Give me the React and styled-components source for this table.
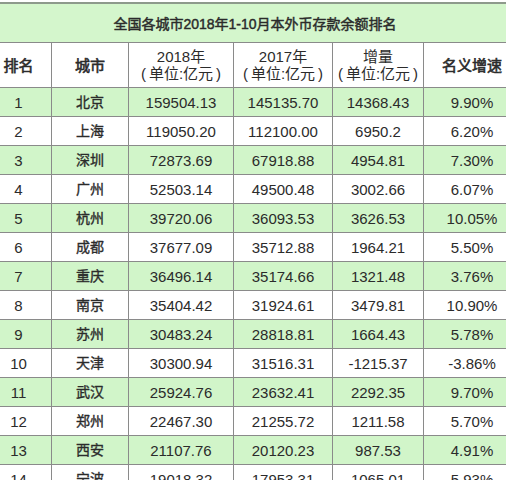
import React from 'react';
import styled, { createGlobalStyle } from 'styled-components';

const rows = [
  ['1', '北京', '159504.13', '145135.70', '14368.43', '9.90%'],
  ['2', '上海', '119050.20', '112100.00', '6950.2', '6.20%'],
  ['3', '深圳', '72873.69', '67918.88', '4954.81', '7.30%'],
  ['4', '广州', '52503.14', '49500.48', '3002.66', '6.07%'],
  ['5', '杭州', '39720.06', '36093.53', '3626.53', '10.05%'],
  ['6', '成都', '37677.09', '35712.88', '1964.21', '5.50%'],
  ['7', '重庆', '36496.14', '35174.66', '1321.48', '3.76%'],
  ['8', '南京', '35404.42', '31924.61', '3479.81', '10.90%'],
  ['9', '苏州', '30483.24', '28818.81', '1664.43', '5.78%'],
  ['10', '天津', '30300.94', '31516.31', '-1215.37', '-3.86%'],
  ['11', '武汉', '25924.76', '23632.41', '2292.35', '9.70%'],
  ['12', '郑州', '22467.30', '21255.72', '1211.58', '5.70%'],
  ['13', '西安', '21107.76', '20120.23', '987.53', '4.91%'],
  ['14', '宁波', '19018.32', '17953.31', '1065.01', '5.93%'],
];

// full-width looking brackets: ascii parens with a little air inside
const Unit = () => (
  <UnitLine>
    <Paren $open>(</Paren>单位:亿元<Paren>)</Paren>
  </UnitLine>
);

const App = () => {
  return (
    <>
      <GlobalStyle />
      <Table>
        <TitleRow>全国各城市2018年1-10月本外币存款余额排名</TitleRow>

        <Row $head>
          <Cell $first $strong>排名</Cell>
          <Cell $strong>城市</Cell>
          <Cell>
            <HeadLine>2018年</HeadLine>
            <Unit />
          </Cell>
          <Cell>
            <HeadLine>2017年</HeadLine>
            <Unit />
          </Cell>
          <Cell>
            <HeadLine>增量</HeadLine>
            <Unit />
          </Cell>
          <Cell $last $strong>名义增速</Cell>
        </Row>

        {rows.map((r, i) => (
          <Row key={r[0]} $green={i % 2 === 0}>
            <Cell $first>{r[0]}</Cell>
            <Cell $city>{r[1]}</Cell>
            <Cell>{r[2]}</Cell>
            <Cell>{r[3]}</Cell>
            <Cell>{r[4]}</Cell>
            <Cell $last>{r[5]}</Cell>
          </Row>
        ))}
      </Table>
    </>
  );
};

const GlobalStyle = createGlobalStyle`
  html, body {
    margin: 0;
    padding: 0;
    background: #fff;
    overflow: hidden;
  }
  body {
    font-family: 'Liberation Sans', 'Noto Sans CJK SC', sans-serif;
    color: #2b2b2b;
  }
`;

const Table = styled.div`
  width: 506px;
  height: 480px;
  padding-top: 2px;
  box-sizing: border-box;
  overflow: hidden;
`;

const TitleRow = styled.div`
  height: 41px;
  box-sizing: border-box;
  border-top: 2px solid #8e9a8c;
  border-bottom: 1px solid #8a8a8a;
  background: #d4f6cc;
  display: flex;
  align-items: center;
  justify-content: center;
  font-size: 14px;
  font-weight: 400;
  -webkit-text-stroke: 0.45px #2b2b2b;
  color: #2b2b2b;
  padding-left: 4px;
`;

const Row = styled.div`
  display: grid;
  grid-template-columns: 51px 77px 105px 99px 91px 83px;
  height: ${(p) => (p.$head ? '45px' : '29px')};
  box-sizing: border-box;
  border-bottom: 1px solid #8a8a8a;
  background: ${(p) => (p.$green ? '#d1f5c9' : '#fff')};
`;

const Cell = styled.div`
  display: flex;
  flex-direction: column;
  align-items: center;
  justify-content: center;
  box-sizing: border-box;
  border-left: ${(p) => (p.$first ? 'none' : '1px solid #8a8a8a')};
  padding-right: ${(p) => (p.$first ? '14px' : '0')};
  padding-left: ${(p) => (p.$last ? '14px' : '0')};
  font-size: ${(p) => (p.$city ? '14px' : '15px')};
  font-weight: 400;
  -webkit-text-stroke: ${(p) => (p.$strong ? '0.6px' : p.$city ? '0.35px' : '0')} #2b2b2b;
  color: #2b2b2b;
  white-space: nowrap;
  line-height: 1;
`;

const HeadLine = styled.span`
  font-size: 15px;
  line-height: 17px;
  color: #2b2b2b;
`;

const UnitLine = styled(HeadLine)`
  display: flex;
  align-items: center;
`;

const Paren = styled.span`
  font-family: 'Liberation Sans', sans-serif;
  font-size: 15px;
  margin: ${(p) => (p.$open ? '0 3px 0 0' : '0 0 0 3px')};
`;

export default App;
